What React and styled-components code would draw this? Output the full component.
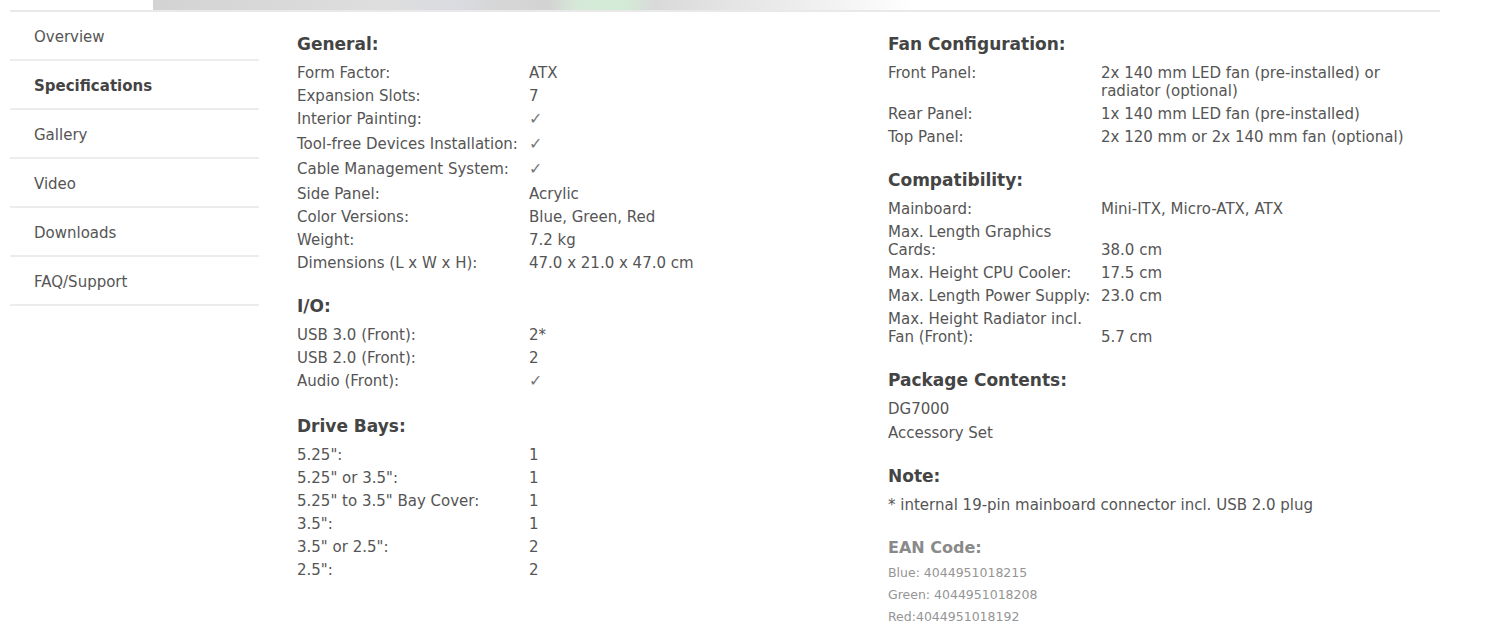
import React from "react";
import styled, { createGlobalStyle } from "styled-components";

const Global = createGlobalStyle`
  html, body { margin: 0; padding: 0; background: #fff; }
  body { font-family: "DejaVu Sans", Verdana, sans-serif; color: #555; }
`;

const Page = styled.div`
  width: 1430px;
  margin-left: 10px;
`;

const Banner = styled.div`
  height: 10px;
  margin-left: 143px;
  width: 760px;
  background: linear-gradient(
    90deg,
    #d3d3d3 0%,
    #d8d8d8 15%,
    #dedede 30%,
    #d9dbe0 40%,
    #d6d6d6 46%,
    #d3d3d3 52%,
    #d6e9d8 56%,
    #d2ecd6 62%,
    #d9d9d9 66%,
    #e0e0e0 72%,
    #e8e8e8 80%,
    #f3f3f3 90%,
    #ffffff 100%
  );
`;

const Rule = styled.div`
  height: 2px;
  background: #e9e9e9;
`;

const Body = styled.div`
  display: flex;
  align-items: flex-start;
`;

const Nav = styled.nav`
  width: 249px;
  flex: 0 0 249px;
  display: flex;
  flex-direction: column;
`;

const NavItem = styled.div`
  display: flex;
  align-items: center;
  padding-left: 24px;
  padding-top: 3px;
  box-sizing: border-box;
  height: 49px;
  border-bottom: 2px solid #ececec;
  font-size: 15px;
  color: ${(p) => (p.$active ? "#444" : "#555")};
  font-weight: ${(p) => (p.$active ? 700 : 400)};
`;

const Content = styled.div`
  margin-left: 38px;
  padding-top: 22px;
  display: grid;
  grid-template-columns: 591px 1fr;
`;

const Column = styled.div`
  display: flex;
  flex-direction: column;
`;

const Section = styled.section`
  margin-bottom: 24px;
`;

const Heading = styled.h3`
  margin: 0 0 ${(p) => (p.$muted ? "6px" : "10px")};
  font-size: ${(p) => (p.$muted ? "16px" : "17px")};
  line-height: 20px;
  font-weight: 700;
  color: ${(p) => (p.$muted ? "#8a8a8a" : "#444")};
`;

const SpecTable = styled.div`
  display: grid;
  grid-template-columns: ${(p) => p.$label}px ${(p) => p.$value}px;
  row-gap: 5px;
  font-size: 15px;
  line-height: 18px;
  color: #555;
`;

const Label = styled.div`
  align-self: start;
  padding-bottom: ${(p) => (p.$tall ? "2px" : "0")};
`;

const Value = styled.div`
  align-self: end;
  height: ${(p) => (p.$tall ? "20px" : "auto")};
  box-sizing: border-box;
`;

const Lines = styled.div`
  display: flex;
  flex-direction: column;
  gap: ${(p) => (p.$small ? "4px" : "6px")};
  font-size: ${(p) => (p.$small ? "12.5px" : "15px")};
  line-height: 18px;
  color: ${(p) => (p.$small ? "#959595" : "#555")};
`;

const CHECK = "\u221A";

const Check = styled.span`
  display: inline-block;
  font-size: 16px;
  line-height: 18px;
  height: 18px;
  vertical-align: top;
  color: #777;
  font-family: "DejaVu Sans", sans-serif;
  font-weight: 200;
`;

function Spec({ rows, label, value }) {
  return (
    <SpecTable $label={label} $value={value}>
      {rows.map(([l, v], i) => {
        const tall = v === CHECK;
        return (
          <React.Fragment key={i}>
            <Label $tall={tall}>{l}</Label>
            <Value $tall={tall}>{tall ? <Check>✓</Check> : v}</Value>
          </React.Fragment>
        );
      })}
    </SpecTable>
  );
}

const general = [
  ["Form Factor:", "ATX"],
  ["Expansion Slots:", "7"],
  ["Interior Painting:", CHECK],
  ["Tool-free Devices Installation:", CHECK],
  ["Cable Management System:", CHECK],
  ["Side Panel:", "Acrylic"],
  ["Color Versions:", "Blue, Green, Red"],
  ["Weight:", "7.2 kg"],
  ["Dimensions (L x W x H):", "47.0 x 21.0 x 47.0 cm"],
];

const io = [
  ["USB 3.0 (Front):", "2*"],
  ["USB 2.0 (Front):", "2"],
  ["Audio (Front):", CHECK],
];

const bays = [
  ['5.25":', "1"],
  ['5.25" or 3.5":', "1"],
  ['5.25" to 3.5" Bay Cover:', "1"],
  ['3.5":', "1"],
  ['3.5" or 2.5":', "2"],
  ['2.5":', "2"],
];

const fans = [
  ["Front Panel:", "2x 140 mm LED fan (pre-installed) or radiator (optional)"],
  ["Rear Panel:", "1x 140 mm LED fan (pre-installed)"],
  ["Top Panel:", "2x 120 mm or 2x 140 mm fan (optional)"],
];

const compat = [
  ["Mainboard:", "Mini-ITX, Micro-ATX, ATX"],
  ["Max. Length Graphics Cards:", "38.0 cm"],
  ["Max. Height CPU Cooler:", "17.5 cm"],
  ["Max. Length Power Supply:", "23.0 cm"],
  ["Max. Height Radiator incl. Fan (Front):", "5.7 cm"],
];

const navItems = ["Overview", "Specifications", "Gallery", "Video", "Downloads", "FAQ/Support"];

export default function App() {
  return (
    <Page>
      <Global />
      <Banner />
      <Rule />
      <Body>
        <Nav>
          {navItems.map((n) => (
            <NavItem key={n} $active={n === "Specifications"}>
              {n}
            </NavItem>
          ))}
        </Nav>
        <Content>
          <Column>
            <Section>
              <Heading>General:</Heading>
              <Spec rows={general} label={232} value={330} />
            </Section>
            <Section>
              <Heading>I/O:</Heading>
              <Spec rows={io} label={232} value={330} />
            </Section>
            <Section>
              <Heading>Drive Bays:</Heading>
              <Spec rows={bays} label={232} value={330} />
            </Section>
          </Column>
          <Column>
            <Section>
              <Heading>Fan Configuration:</Heading>
              <Spec rows={fans} label={213} value={315} />
            </Section>
            <Section>
              <Heading>Compatibility:</Heading>
              <Spec rows={compat} label={213} value={315} />
            </Section>
            <Section>
              <Heading>Package Contents:</Heading>
              <Lines>
                <div>DG7000</div>
                <div>Accessory Set</div>
              </Lines>
            </Section>
            <Section>
              <Heading>Note:</Heading>
              <Lines>
                <div>* internal 19-pin mainboard connector incl. USB 2.0 plug</div>
              </Lines>
            </Section>
            <Section>
              <Heading $muted>EAN Code:</Heading>
              <Lines $small>
                <div>Blue: 4044951018215</div>
                <div>Green: 4044951018208</div>
                <div>Red:4044951018192</div>
              </Lines>
            </Section>
          </Column>
        </Content>
      </Body>
    </Page>
  );
}
